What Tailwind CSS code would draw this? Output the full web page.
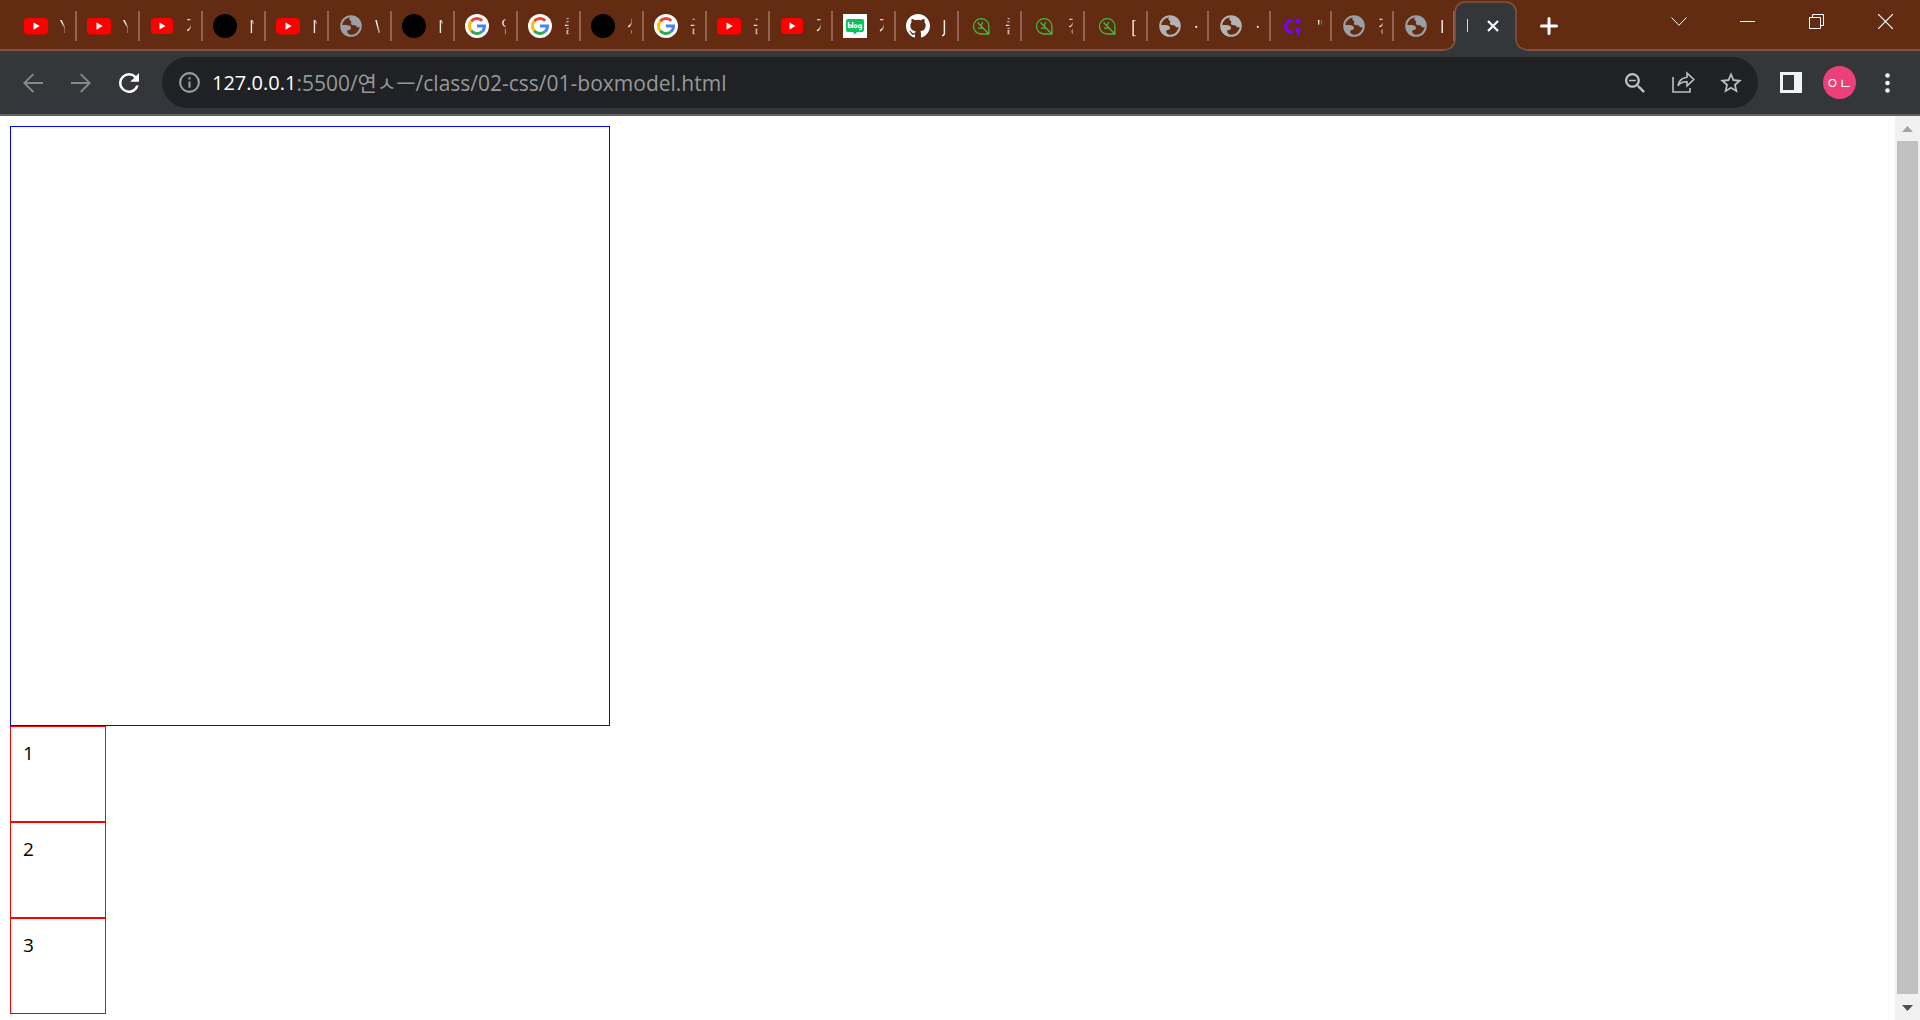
<!DOCTYPE html>
<html lang="ko">
<head>
<meta charset="utf-8">
<title>01-boxmodel</title>
<script src="https://cdn.jsdelivr.net/npm/@tailwindcss/browser@4"></script>
</head>
<body class="flex min-h-screen flex-col overflow-hidden bg-white font-['Open_Sans','Noto_Sans_CJK_KR',sans-serif]">

<svg class="hidden" aria-hidden="true">
  <symbol id="youtube" viewBox="0 0 24 24"><rect y="4" width="24" height="16.5" rx="4" fill="#f00"/><path d="M9.5 8.5v7.2l6.2-3.6z" fill="#fff"/></symbol>
  <symbol id="youtube-small" viewBox="0 0 24 24"><rect x="1" y="4" width="22" height="16" rx="4" fill="#f00"/><path d="M9.5 8.5v7l6-3.5z" fill="#fff"/></symbol>
  <symbol id="dot" viewBox="0 0 24 24"><circle cx="12" cy="12" r="12" fill="#000"/></symbol>
  <symbol id="globe" viewBox="0 0 24 24"><circle cx="12" cy="12" r="9.8" fill="none" stroke="currentColor" stroke-width="2"/><path fill="currentColor" d="M12.500 2.200c-1 1-2.200 1.600-2.200 3 0 1.500 2 1 2 2.500 0 1-.6 1.300-.3 2.300.4 1.200 2.500 1.200 4 1.300 1.400.1 1.500 2.200 3 2.200 1.200 0 2-.6 3-1.200C22.300 7 18.500 2 12.500 2.200zM2 11.500c1.500-.7 3.500-.5 5.300-.4 2.800.1 4.700.9 4.700 3 0 1.400-1 1.900-2.300 1.900-1.400 0-1.500 1-1.400 2.200.1 1.300 1.600 1.300 2 2.400.3.800 0 1.400-.3 1.800C5 21.500 1.500 17 2 11.500z"/></symbol>
  <symbol id="globe-light" viewBox="0 0 24 24"><use href="#globe" width="24" height="24" color="#b3b3b3"/></symbol>
  <symbol id="google" viewBox="0 0 24 24"><circle cx="12" cy="12" r="12" fill="#fff"/><path d="M6.200 7.300A7.500 7.500 0 0 1 17.300 6.700" fill="none" stroke="#ea4335" stroke-width="3"/><path d="M6.200 7.300A7.500 7.500 0 0 0 6.200 16.700" fill="none" stroke="#fbbc05" stroke-width="3"/><path d="M6.200 16.700A7.500 7.500 0 0 0 16.600 17.900" fill="none" stroke="#34a853" stroke-width="3"/><path d="M12 12h7.500a7.500 7.500 0 0 1-2.900 5.900" fill="none" stroke="#4285f4" stroke-width="3"/></symbol>
  <symbol id="blog" viewBox="0 0 24 24"><path fill="#fff" d="M0 0h24v24H0z"/><path fill="#03c75a" d="M5 5h14a2 2 0 0 1 2 2v9a2 2 0 0 1-2 2h-5l-2 2.500L10 18H5a2 2 0 0 1-2-2V7a2 2 0 0 1 2-2z"/><g fill="none" stroke="#fff" stroke-width="1.300"><path d="M5.500 8v6M9.700 8v6"/><circle cx="7" cy="12.300" r="1.400"/><circle cx="12.600" cy="12.300" r="1.400"/><circle cx="16.800" cy="12.300" r="1.400"/><path d="M18.500 10.500v4c0 1-.8 1.200-2.500 1.100"/></g></symbol>
  <symbol id="github" viewBox="0 0 16 16"><path fill="#fff" d="M8 0C3.580 0 0 3.580 0 8c0 3.540 2.290 6.530 5.470 7.590.4.070.55-.17.55-.38 0-.19-.01-.82-.01-1.490-2.010.37-2.530-.49-2.690-.94-.09-.23-.48-.94-.82-1.130-.28-.15-.68-.52-.01-.53.63-.01 1.080.58 1.230.82.72 1.210 1.870.87 2.330.66.07-.52.28-.87.51-1.070-1.780-.2-3.640-.89-3.640-3.950 0-.87.31-1.590.82-2.150-.08-.2-.36-1.020.08-2.120 0 0 .67-.21 2.200.82a7.600 7.600 0 0 1 4 0c1.530-1.040 2.200-.82 2.200-.82.44 1.100.16 1.920.08 2.120.51.56.82 1.270.82 2.150 0 3.070-1.870 3.750-3.650 3.950.29.25.54.73.54 1.480 0 1.070-.01 1.930-.01 2.200 0 .21.15.46.55.38A8 8 0 0 0 16 8c0-4.420-3.580-8-8-8z"/></symbol>
  <symbol id="leaf" viewBox="0 0 24 24"><path d="M12.200 4.600A7.700 7.700 0 0 1 19.900 12.300V20h-7.700a7.700 7.700 0 0 1 0-15.400zM8.500 8.500L19.900 20M11.800 12l2-4M13.500 14.200H9" fill="none" stroke="#44b944" stroke-width="1.300"/></symbol>
  <symbol id="purple" viewBox="0 0 24 24"><path d="M11.800 6.500h-1.300a5.500 5.500 0 0 0 0 11.600h1.300" fill="none" stroke="#7b00ff" stroke-width="3.200"/><circle cx="17" cy="7" r="2.500" fill="#7b00ff"/><path d="M14.500 16a2.500 2.500 0 0 1 5 0c0 3-1.200 5-3 5.800l-.8-1.400c.8-.5 1.100-1.100 1.100-1.900-1.300 0-2.300-1-2.300-2.500z" fill="#7b00ff"/></symbol>
</svg>

<header>
  <div class="flex h-[51px] border-b-2 border-[#84533f] bg-[#632b12] pl-[14px]">
    <nav class="flex" role="tablist" aria-label="Tabs">
      <div id="tabs" class="flex"></div>
      <div id="narrow-tabs" class="flex w-[307px]"></div>
      <div class="relative h-[51px] w-[62px]">
        <svg class="absolute -left-3 top-0 h-[51px] w-[86px]" viewBox="0 0 86 51" fill="#35363a" stroke="#84533f" stroke-width="1.500" aria-hidden="true"><path stroke="none" d="M0 51v-1a12 12 0 0 0 12-11V12A10 10 0 0 1 22 2h41a10 10 0 0 1 10 10v27a12 12 0 0 0 12 11v1z"/><path fill="none" d="M0 50c8 0 12-5 12-11V12A10 10 0 0 1 22 2h41a10 10 0 0 1 10 10v27c0 6 4 11 13 11"/></svg>
        <div class="relative flex h-[51px] items-center pl-3">
          <button class="w-[2px] overflow-hidden" role="tab" aria-selected="true" aria-label="Current tab"><span class="block h-[13px] w-px bg-white/80"></span></button>
          <button class="ml-3 flex size-6 items-center justify-center" aria-label="Close tab"><svg class="size-3" viewBox="0 0 12 12" stroke="#fff" stroke-width="2.200"><path d="M1 1l10 10M11 1L1 11"/></svg></button>
        </div>
      </div>
    </nav>
    <button class="ml-[14px] flex h-[51px] w-9 items-center justify-center" aria-label="New tab"><svg class="size-[18px]" viewBox="0 0 18 18" stroke="#fff" stroke-width="3" stroke-linecap="round"><path d="M9 1.500v15M1.500 9h15"/></svg></button>
    <div class="ml-auto flex h-[43px]">
      <button class="flex w-[69px] items-center justify-center" aria-label="Search tabs"><svg class="h-[9px] w-4" viewBox="0 0 16 9" fill="none" stroke="#fff"><path d="M.5.500L8 8.300 15.500.500"/></svg></button>
      <button class="flex w-[69px] items-center justify-center" aria-label="Minimize"><svg class="h-px w-[15px]" viewBox="0 0 15 1"><path fill="#fff" d="M0 0h15v1H0z"/></svg></button>
      <button class="flex w-[69px] items-center justify-center" aria-label="Restore"><svg class="size-[15px]" viewBox="0 0 15 15" fill="none" stroke="#fff"><path d="M.5 3.500h11v11H.5zM3.500 3.500v-3h11v11h-3"/></svg></button>
      <button class="flex w-[69px] items-center justify-center" aria-label="Close"><svg class="size-[15px]" viewBox="0 0 15 15" stroke="#fff" stroke-width="1.200"><path d="M0 0l15 15M15 0L0 15"/></svg></button>
    </div>
  </div>

  <div class="flex h-[65px] items-center border-b-2 border-[#5f6063] bg-[#35363a] px-[9px]">
    <button class="flex w-12 justify-center text-[#86878a]" aria-label="Back"><svg class="size-[30px]" viewBox="0 0 24 24" fill="currentColor"><path d="M20 11.200H7L12.800 5.400 11.700 4.300 4 12l7.700 7.700 1.100-1.100L7 12.800h13z"/></svg></button>
    <button class="flex w-12 justify-center text-[#86878a]" aria-label="Forward"><svg class="size-[30px]" viewBox="0 0 24 24" fill="currentColor"><path d="M4 11.200h13l-5.800-5.800 1.100-1.100L20 12l-7.700 7.700-1.100-1.100 5.800-5.800H4z"/></svg></button>
    <button class="flex w-12 justify-center text-white" aria-label="Reload"><svg class="size-[30px]" viewBox="0 0 24 24" fill="currentColor"><path d="M17.650 6.350A7.960 7.960 0 0 0 12 4a8 8 0 1 0 7.730 10h-2.080A6 6 0 1 1 12 6c1.660 0 3.140.69 4.220 1.780L13 11h7V4z"/></svg></button>
    <form class="mx-[9px] flex h-[51px] flex-1 items-center rounded-full bg-[#202124] pl-[13px] pr-[3px]">
      <button type="button" class="flex w-[29px] justify-center text-[#9aa0a6]" aria-label="Site information"><svg class="size-[25px]" viewBox="0 0 24 24" fill="currentColor"><path d="M11 7h2v2h-2zm0 4h2v6h-2zm1-9a10 10 0 1 0 0 20 10 10 0 0 0 0-20zm0 18a8 8 0 1 1 0-16 8 8 0 0 1 0 16z"/></svg></button>
      <label for="address" class="ml-2 text-[20px] leading-7 text-white">127.0.0.1</label>
      <input id="address" class="min-w-0 flex-1 bg-transparent text-[21px] leading-7 text-[#969899] outline-none" value=":5500/연ㅅㅡ/class/02-css/01-boxmodel.html">
      <button type="button" class="flex w-12 justify-center text-[#bdbec0]" aria-label="Zoom"><svg class="size-5" viewBox="3 3 17.500 17.500" fill="currentColor"><path d="M15.500 14h-.79l-.28-.27A6.500 6.500 0 1 0 13.730 14.430l.27.28v.79l5 4.990L20.490 19zm-6 0a4.500 4.500 0 1 1 0-9 4.500 4.500 0 0 1 0 9zM6.500 8.800h6v1.500h-6z"/></svg></button>
      <button type="button" class="flex w-12 justify-center text-[#bdbec0]" aria-label="Share"><svg class="size-[23px]" viewBox="0 0 23 23" fill="none" stroke="currentColor" stroke-width="1.600"><path d="M1 6v15h17v-4M15 2.200l6.800 6.300-6.800 6.300v-4c-4.200-.2-7 1-9 4 .8-5.200 3.800-8 9-8.600z"/></svg></button>
      <button type="button" class="flex w-12 justify-center text-[#bdbec0]" aria-label="Bookmark"><svg class="size-[26px]" viewBox="0 0 24 24" fill="currentColor"><path d="M22 9.240l-7.190-.62L12 2 9.190 8.630 2 9.240l5.460 4.730L5.820 21 12 17.270 18.180 21l-1.630-7.030zM12 15.400l-3.760 2.270 1-4.280-3.320-2.880 4.380-.38L12 6.100l1.710 4.040 4.380.38-3.320 2.880 1 4.280z"/></svg></button>
    </form>
    <button class="flex w-12 justify-center" aria-label="Side panel"><svg class="h-[21px] w-[22px]" viewBox="0 0 22 21"><path fill="#f1f3f4" fill-rule="evenodd" d="M0 0h22v21H0zM3 3v15h11V3z"/></svg></button>
    <button class="flex w-12 justify-center" aria-label="Profile"><span class="flex size-[33px] items-center justify-center rounded-full bg-[#ec407a] text-[14px] leading-4 text-white">ㅇㄴ</span></button>
    <button class="flex w-12 justify-center" aria-label="Menu"><svg class="h-5 w-[5px]" viewBox="0 0 5 20" fill="#f1f3f4"><circle cx="2.500" cy="2.500" r="2.300"/><circle cx="2.500" cy="10" r="2.300"/><circle cx="2.500" cy="17.500" r="2.300"/></svg></button>
  </div>
</header>

<div class="flex flex-1">
  <main id="page" class="flex-1 px-[10px] pt-[10px] pb-[6px] text-[19px] leading-6 text-black">
    <div class="size-[600px] border border-[#00f]"></div>
    <div class="size-24 border border-[#f00] px-3 pt-[14px]">1</div>
    <div class="size-24 border border-[#f00] px-3 pt-[14px]">2</div>
    <div class="size-24 border border-[#f00] px-3 pt-[14px]">3</div>
  </main>
  <div class="flex w-[25px] flex-col items-center bg-[#f1f1f1]" role="scrollbar" aria-controls="page" aria-valuenow="0">
    <div class="flex h-[25px] items-center"><svg class="h-[6px] w-[11px]" viewBox="0 0 11 6"><path fill="#a3a3a3" d="M5.500 0L11 6H0z"/></svg></div>
    <div class="w-[21px] flex-1 bg-[#c1c1c1]"></div>
    <div class="flex h-[26px] items-center pt-[2px]"><svg class="h-[6px] w-[11px]" viewBox="0 0 11 6"><path fill="#505050" d="M0 0h11L5.500 6z"/></svg></div>
  </div>
</div>

<script>
  const tab = (icon, title, size) => `
    <button role="tab" class="${size} flex h-[51px] items-center pl-[10px]">
      <svg class="size-6 shrink-0 text-[#9aa0a6]" aria-hidden="true"><use href="#${icon}"/></svg>
      <span class="ml-3 w-[5px] shrink-0 overflow-hidden whitespace-nowrap bg-linear-to-r from-white from-40% to-white/30 bg-clip-text text-left text-lg leading-6 text-transparent">${title}</span>
      <span class="ml-auto h-[30px] w-[2px] bg-[#92624f]"></span>
    </button>`;
  const wide = [['youtube','Y'],['youtube','Y'],['youtube-small','지'],['dot','N'],['youtube','N'],['globe','W'],
    ['dot','N'],['google','연'],['google','클'],['dot','생'],['google','금'],['youtube','금'],['youtube-small','자'],
    ['blog','자'],['github','J'],['leaf','클'],['leaf','정'],['leaf','[']];
  const narrow = [['globe-light','·'],['globe-light','·'],['purple','"'],['globe','장'],['globe','I']];
  document.getElementById('tabs').innerHTML = wide.map(t => tab(...t, 'w-[63px]')).join('');
  document.getElementById('narrow-tabs').innerHTML = narrow.map(t => tab(...t, 'flex-1')).join('');
</script>
</body>
</html>
